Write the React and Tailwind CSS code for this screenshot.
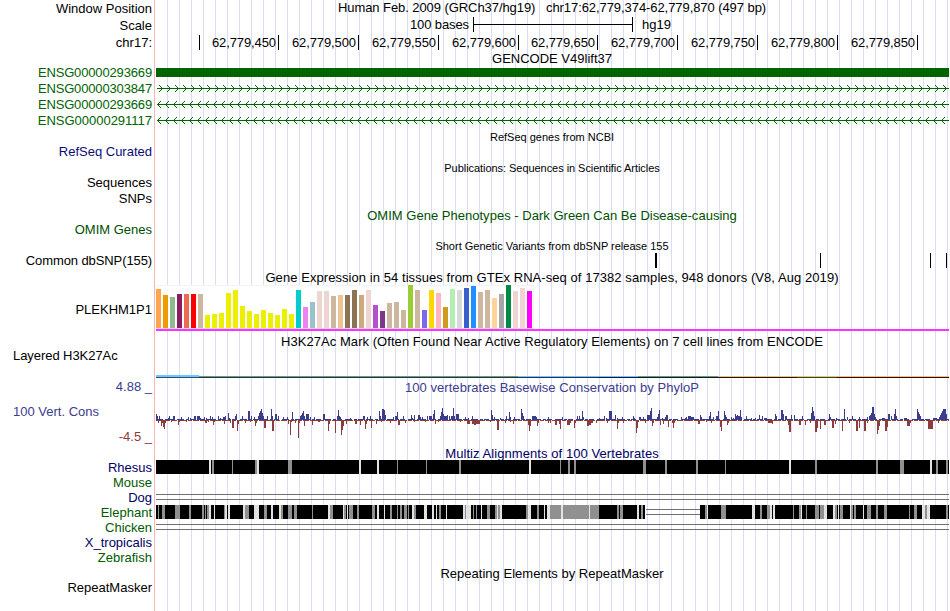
// Visible width of the track image and where the data area starts
const LEFT = 155
const RIGHT = 949

const GTEX = [
  [39, '#ffa54f'], [33, '#ee9a00'], [31, '#8fbc8f'], [34, '#8b1c62'], [34, '#ee6a50'], [34, '#ff0000'],
  [34, '#cdb79e'], [13, '#eeee00'], [14, '#eeee00'], [15, '#eeee00'], [35, '#eeee00'], [38, '#eeee00'],
  [22, '#eeee00'], [17, '#eeee00'], [14, '#eeee00'], [18, '#eeee00'], [15, '#eeee00'], [13, '#eeee00'],
  [19, '#eeee00'], [14, '#eeee00'], [38, '#00cdcd'], [21, '#ee82ee'], [26, '#9ac0cd'], [37, '#eed5d2'],
  [37, '#eed5d2'], [32, '#cdb79e'], [33, '#eec591'], [33, '#8b7355'], [38, '#8b7355'], [33, '#cdaa7d'],
  [38, '#eed5d2'], [23, '#b452cd'], [17, '#7a378b'], [25, '#cdb79e'], [26, '#cdb79e'], [18, '#cdb79e'],
  [43, '#9acd32'], [38, '#cdb79e'], [18, '#7b68ee'], [38, '#ffd700'], [35, '#ffb6c1'], [21, '#cd9b1d'],
  [39, '#b4eeb4'], [38, '#d9d9d9'], [40, '#3a5fcd'], [42, '#1e90ff'], [36, '#cdb79e'], [38, '#cdb79e'],
  [30, '#ffd39b'], [34, '#a6a6a6'], [43, '#008b45'], [37, '#eed5d2'], [40, '#eed5d2'], [37, '#ff00ff'],
]

// PhyloP scores as [x, height, width]
const CONSERVED = [
  [156, 6], [157, 4], [159, 4], [168, 2], [169, 4], [173, 4, 2], [181, 3], [188, 3], [190, 2], [194, 4, 2],
  [197, 4, 3], [200, 2], [204, 3], [206, 2], [210, 4], [212, 3], [218, 4], [220, 2], [223, 3, 2], [225, 4],
  [228, 7], [229, 2], [235, 4], [236, 6], [242, 4], [248, 9, 2], [251, 4], [254, 3], [258, 4], [259, 7],
  [260, 9], [261, 11], [262, 7], [263, 4], [267, 4], [271, 11], [272, 4], [275, 6, 2], [278, 4], [283, 3],
  [287, 3], [292, 8], [300, 4], [301, 5], [302, 7], [303, 9], [304, 4], [306, 6, 3], [310, 3], [314, 3],
  [323, 6, 2], [337, 4], [338, 10], [339, 4], [340, 3], [350, 2], [363, 4, 2], [367, 3], [370, 4], [379, 9],
  [380, 4], [382, 11, 2], [384, 10], [385, 5], [393, 3], [395, 4], [396, 4], [397, 8], [403, 4], [411, 5],
  [412, 2], [414, 5], [418, 5, 2], [420, 3], [422, 3], [427, 4], [429, 4, 3], [433, 6], [434, 10], [440, 4],
  [441, 8], [442, 12], [443, 6], [444, 4, 3], [447, 5], [449, 4], [451, 4, 2], [453, 12], [454, 4], [456, 6, 3],
  [465, 3], [468, 2], [472, 4], [491, 10], [492, 5], [494, 3], [500, 2], [506, 4], [509, 8], [510, 3], [514, 3],
  [521, 11], [522, 7], [523, 4], [532, 4, 4], [536, 3], [548, 3], [562, 3], [577, 4], [579, 4], [582, 9],
  [583, 3], [599, 2], [604, 4], [606, 2], [609, 9, 3], [615, 5], [617, 2], [622, 3], [633, 4], [634, 2],
  [639, 3, 2], [643, 3], [647, 5, 3], [650, 9], [651, 12], [657, 3], [658, 6], [659, 10], [662, 2], [665, 3],
  [666, 5, 2], [681, 3], [685, 2], [686, 3], [688, 4, 3], [691, 3, 3], [700, 5], [701, 3], [709, 4], [710, 8],
  [713, 3], [716, 4, 2], [718, 9], [724, 9], [725, 5], [726, 3], [731, 3], [733, 2], [735, 6], [736, 4],
  [737, 5], [738, 4, 2], [740, 10], [741, 3], [746, 4], [751, 2], [755, 2], [759, 5], [762, 4], [764, 2, 3],
  [775, 6], [776, 4], [781, 10, 2], [783, 6], [785, 4, 2], [791, 5], [794, 5], [802, 4], [811, 7], [812, 13],
  [813, 9], [814, 4], [829, 6], [830, 3], [836, 2], [844, 11], [847, 3], [852, 4], [859, 3], [867, 3],
  [869, 4], [870, 5], [871, 7], [872, 13, 2], [874, 6], [875, 3], [882, 2, 3], [888, 6, 2], [891, 4], [894, 6],
  [895, 11], [896, 4], [904, 2, 3], [917, 11], [918, 8], [919, 6], [920, 4], [933, 2, 4], [939, 3], [940, 5],
  [941, 7], [942, 9], [943, 11, 3], [945, 9], [946, 6],
]

const DIVERGED = [
  [158, 3], [161, 6], [162, 3], [163, 7], [164, 9], [165, 3], [171, 2], [178, 5], [179, 2], [186, 2],
  [205, 3, 2], [208, 2], [213, 5], [214, 2], [224, 4], [230, 3], [232, 8, 2], [237, 11], [238, 4], [245, 3],
  [250, 2], [255, 6], [256, 3], [264, 8, 2], [272, 11, 2], [288, 4], [290, 15], [291, 2], [295, 3], [298, 18],
  [299, 3], [304, 6], [312, 5], [318, 2], [319, 2], [328, 11], [329, 4], [335, 13], [341, 15],
  [342, 10], [343, 6], [346, 4], [355, 4, 2], [360, 5], [365, 9], [366, 4], [371, 8], [376, 4], [381, 2],
  [390, 3], [398, 5, 2], [405, 3], [414, 2], [425, 2], [435, 4], [438, 2], [460, 2], [467, 4, 3], [472, 4, 2],
  [474, 5, 2], [476, 4, 4], [490, 2], [497, 10, 2], [505, 3], [510, 2], [513, 4], [528, 5], [529, 11],
  [530, 6], [537, 6], [538, 3], [548, 3], [550, 3], [555, 5], [556, 5], [559, 4], [560, 9], [567, 5, 3],
  [570, 3], [574, 8], [575, 3], [587, 6, 2], [589, 5, 2], [591, 3, 2], [596, 3], [607, 3], [617, 9], [618, 3],
  [623, 3], [636, 13], [637, 8], [638, 2], [645, 3], [652, 6], [653, 3], [660, 5], [663, 4], [668, 7],
  [672, 3], [673, 8], [674, 3], [698, 4, 2], [706, 2], [711, 3], [720, 7], [721, 11], [727, 5], [728, 3],
  [768, 3, 4], [772, 4], [788, 5], [789, 12, 2], [799, 5, 2], [805, 5], [810, 3], [815, 12, 2], [817, 8],
  [820, 9], [824, 5, 2], [832, 8, 2], [835, 4], [842, 11], [849, 3], [856, 11, 2], [859, 8], [864, 11, 2],
  [867, 3], [877, 14], [878, 10], [879, 6], [885, 11, 2], [887, 7], [907, 6, 3], [910, 3], [928, 9, 5], [938, 3],
]

// Less conserved blocks in the alignments, [x, width, shade]
const G = '#909090'
const L = '#e2e2e2'
const RHESUS = [
  [209, 2, L], [212, 2, G], [232, 1, G], [255, 2, G], [257, 2, L], [288, 4, G], [359, 2, L], [377, 2, L],
  [397, 1, G], [426, 1, G], [459, 2, G], [529, 2, L], [560, 1, G], [568, 2, G], [574, 2, G], [643, 3, G],
  [665, 2, G], [696, 2, G], [725, 1, G], [789, 2, L], [815, 2, G], [876, 2, G], [900, 4, G], [930, 2, L],
  [936, 2, G], [946, 2, G],
]
const ELEPHANT = [
  [158, 1, G], [162, 3, G], [175, 5, G], [189, 2, G], [202, 2, G], [205, 1, G], [207, 2, G], [209, 2, L],
  [214, 1, L], [224, 1, G], [225, 2, L], [228, 2, L], [243, 2, L], [245, 4, G], [254, 5, L], [264, 3, G],
  [271, 2, L], [279, 2, L], [281, 2, G], [288, 4, G], [294, 3, G], [312, 1, G], [328, 2, L], [330, 3, G],
  [343, 1, L], [344, 2, G], [347, 1, L], [349, 4, G], [357, 2, G], [372, 3, G], [377, 2, L], [384, 1, L],
  [390, 2, G], [397, 1, G], [400, 2, G], [404, 3, G], [408, 1, G], [412, 2, L], [414, 2, G], [424, 3, L],
  [432, 2, L], [436, 1, L], [439, 2, G], [446, 1, L], [463, 2, L], [465, 1, G], [466, 5, L], [473, 1, G],
  [476, 1, G], [481, 1, L], [487, 3, G], [495, 2, G], [497, 1, L], [498, 2, G], [500, 2, L], [526, 2, G],
  [528, 3, L], [537, 2, G], [544, 1, L], [547, 3, L], [550, 11, G], [561, 2, L], [563, 26, G], [589, 1, L],
  [590, 9, G], [617, 2, G], [620, 3, G], [637, 2, L], [641, 2, G], [705, 2, G], [707, 1, L], [721, 5, G],
  [752, 3, L], [760, 2, G], [767, 3, G], [770, 2, L], [773, 2, L], [793, 1, G], [799, 2, G], [801, 1, L],
  [806, 1, G], [815, 4, G], [820, 4, G], [824, 3, L], [833, 2, L], [835, 2, G], [838, 1, L], [840, 3, G],
  [850, 1, L], [851, 2, G], [854, 2, G], [863, 1, L], [867, 4, G], [876, 2, G], [884, 3, G], [909, 1, G],
  [914, 3, G], [922, 3, L], [925, 2, G], [927, 3, L], [946, 2, G],
]

const RULER = [
  [199, ''], [278, '62,779,450'], [358, '62,779,500'], [438, '62,779,550'], [518, '62,779,600'],
  [597, '62,779,650'], [677, '62,779,700'], [757, '62,779,750'], [837, '62,779,800'], [917, '62,779,850'],
]

// A drawing that fills the data area; x is in window pixels, y starts at the row's top
function Canvas({ h, children }) {
  return (
    <svg
      className="block"
      width={RIGHT - LEFT}
      height={h}
      viewBox={`${LEFT} 0 ${RIGHT - LEFT} ${h}`}
      shapeRendering="crispEdges"
    >
      {children}
    </svg>
  )
}

function Row({ className, label, labelClass = 'items-center justify-end', children }) {
  return (
    <div className={`flex shrink-0 ${className}`}>
      <div className={`flex w-[152px] mr-[3px] shrink-0 whitespace-pre ${labelClass}`}>{label}</div>
      <div className="flex-1">{children}</div>
    </div>
  )
}

// 16px rows keep their label one pixel above the middle
const RAISED = 'items-center justify-end pb-0.5'

function Title({ className, children }) {
  return (
    <div className={`flex shrink-0 items-center justify-center whitespace-pre pl-[155px] ${className}`}>{children}</div>
  )
}

function Intron({ dir }) {
  const arrows = []
  for (let x = dir > 0 ? 162 : 157; x < RIGHT; x += 8) {
    arrows.push(
      <g key={x}>
        <rect x={x - dir} y="6" width="1" height="1" />
        <rect x={x - dir} y="8" width="1" height="1" />
        <rect x={x - dir * 2} y="5" width="1" height="1" />
        <rect x={x - dir * 2} y="9" width="1" height="1" />
        <rect x={x - dir * 3} y="4" width="1" height="1" />
        <rect x={x - dir * 3} y="10" width="1" height="1" />
      </g>
    )
  }
  return (
    <Canvas h={16}>
      <g fill="#006400">
        <rect x="157" y="7" width="792" height="1" />
        {arrows}
      </g>
    </Canvas>
  )
}

function Alignment({ spans, blocks, children }) {
  return (
    <Canvas h={15}>
      {spans.map(([x, w]) => (
        <rect key={x} x={x} y="0" width={w} height="14" fill="#000" />
      ))}
      {blocks.map(([x, w, fill]) => (
        <rect key={x} x={x} y="0" width={w} height="14" fill={fill} />
      ))}
      {children}
    </Canvas>
  )
}

function DoubleLine({ x = 156, w = 793 }) {
  return (
    <g fill="#707070">
      <rect x={x} y="4" width={w} height="1" />
      <rect x={x} y="9" width={w} height="1" />
    </g>
  )
}

export default function App() {
  return (
    <div className="w-[950px] h-[611px] overflow-hidden bg-white">
      <div className="flex h-full w-[949px] flex-col bg-[linear-gradient(to_right,transparent_154px,#ffb4b4_154px,#ffb4b4_155px,#fff_155px,#fff_156px,transparent_156px),repeating-linear-gradient(to_right,transparent_0px,transparent_11px,#dcdcf5_11px,#dcdcf5_12px)] bg-[length:156px_100%,793px_100%] bg-[position:0_0,156px_0] bg-no-repeat font-['Liberation_Sans',Arial,sans-serif] text-[13px] leading-none text-black">
        <Row className="h-[17px]" label="Window Position">
          <div className="flex h-[15px] items-center justify-center whitespace-pre tracking-[-0.07px]">
            Human Feb. 2009 (GRCh37/hg19)   chr17:62,779,374-62,779,870 (497 bp)
          </div>
        </Row>

        <Row className="h-[17px]" label="Scale">
          <div className="flex h-4 items-center">
            <span className="w-[314px] pb-px text-right tracking-[-0.1px]">100 bases</span>
            <svg className="ml-1 block" width="160" height="16" shapeRendering="crispEdges">
              <path d="M0 0h1v15h-1zM159 0h1v15h-1zM0 7h160v1h-160z" />
            </svg>
            <span className="ml-[9px] pb-px">hg19</span>
          </div>
        </Row>

        <Row className="h-[17px]" label="chr17:">
          <div className="flex h-full">
            {RULER.map(([x, text], i) => (
              <div
                key={x}
                className="flex shrink-0 items-center justify-end"
                style={{ width: x + 1 - (i ? RULER[i - 1][0] + 1 : LEFT) }}
              >
                <span className="mr-[2px] tracking-[-0.1px]">{text}</span>
                <span className="h-[15px] w-px bg-black" />
              </div>
            ))}
          </div>
        </Row>

        <Title className="h-[14px]">GENCODE V49lift37</Title>
        <Row className="h-4 tracking-[-0.15px] text-[#006400]" label="ENSG00000293669" labelClass={RAISED}>
          <Canvas h={16}>
            <rect x="156" y="3" width="793" height="9" fill="#006400" />
          </Canvas>
        </Row>
        <Row className="h-4 tracking-[-0.15px] text-[#006400]" label="ENSG00000303847" labelClass={RAISED}>
          <Intron dir={1} />
        </Row>
        <Row className="h-4 tracking-[-0.15px] text-[#006400]" label="ENSG00000293669" labelClass={RAISED}>
          <Intron dir={-1} />
        </Row>
        <Row className="h-4 tracking-[-0.02px] text-[#006400]" label="ENSG00000291117" labelClass={RAISED}>
          <Intron dir={-1} />
        </Row>

        <Title className="h-[15px] pt-0.5 text-[11px]">RefSeq genes from NCBI</Title>
        <Row className="h-4 text-[#0c0c78]" label="RefSeq Curated" labelClass={RAISED} />

        <Title className="h-[15px] pt-0.5 text-[11px] tracking-[-0.05px]">
          Publications: Sequences in Scientific Articles
        </Title>
        <Row className="h-4" label="Sequences" labelClass={RAISED} />
        <Row className="h-4" label="SNPs" labelClass={RAISED} />

        <Title className="h-[14px] pt-[3px] tracking-[0.02px] text-[#005000]">
          OMIM Gene Phenotypes - Dark Green Can Be Disease-causing
        </Title>
        <Row className="h-4 text-[#005000]" label="OMIM Genes" />

        <Title className="h-4 pt-[3px] text-[11px]">Short Genetic Variants from dbSNP release 155</Title>
        <Row className="h-4 tracking-[-0.1px]" label="Common dbSNP(155)" labelClass={RAISED}>
          <Canvas h={16}>
            <path d="M655 0h2v15h-2zM820 0h1v15h-1zM930 0h1v15h-1zM946 0h1v15h-1z" />
          </Canvas>
        </Row>

        <Title className="h-4 tracking-[0.065px]">
          Gene Expression in 54 tissues from GTEx RNA-seq of 17382 samples, 948 donors (V8, Aug 2019)
        </Title>
        <Row className="h-[49px]" label="PLEKHM1P1">
          <Canvas h={49}>
            <rect x="156" y="0" width="378" height="44" fill="#f3f3f3" />
            <rect x="156" y="1" width="377" height="42" fill="#fff" />
            {GTEX.map(([h, fill], i) => (
              <rect key={i} x={156 + i * 7} y={43 - h} width="5" height={h} fill={fill} />
            ))}
            <rect x="156" y="43" width="378" height="1" fill="#d8d8d8" />
            <rect x="156" y="44" width="793" height="2" fill="#ff33ff" />
          </Canvas>
        </Row>

        <Title className="h-[15px] tracking-[0.05px]">
          H3K27Ac Mark (Often Found Near Active Regulatory Elements) on 7 cell lines from ENCODE
        </Title>
        <Row className="h-[29px]" label="Layered H3K27Ac" labelClass="h-[13px] items-center pl-[13px] tracking-[-0.06px]">
          <Canvas h={29}>
            <rect x="156" y="26" width="43" height="2" fill="#6ec8ff" />
            <rect x="199" y="27" width="319" height="1" fill="#64a564" />
            <rect x="518" y="27" width="120" height="1" fill="#6ec8ff" />
            <rect x="638" y="27" width="80" height="1" fill="#64a564" />
            <rect x="718" y="27" width="231" height="1" fill="#ffc050" />
            <rect x="156" y="28" width="43" height="1" fill="#2d4b78" />
            <rect x="199" y="28" width="399" height="1" fill="#2d2d5f" />
            <rect x="598" y="28" width="199" height="1" fill="#14143c" />
            <rect x="797" y="28" width="40" height="1" fill="#234b4b" />
            <rect x="837" y="28" width="112" height="1" fill="#280a28" />
          </Canvas>
        </Row>

        <Row className="h-4 text-[#3c3c8c]" label="4.88 _">
          <div className="flex h-[19px] items-center justify-center tracking-[0.04px]">
            100 vertebrates Basewise Conservation by PhyloP
          </div>
        </Row>
        <div className="flex h-[53px] shrink-0">
          <div className="flex w-[152px] mr-[3px] flex-col text-[#3c3c8c]">
            <span className="mt-[11px] pl-[13px]">100 Vert. Cons</span>
            <span className="mt-3 text-right text-[#8c3c3c] whitespace-pre">-4.5 _</span>
          </div>
          <Canvas h={53}>
            <path d="M156 25.5H949" stroke="#3c3c8c" strokeDasharray="7 2 3 1 5 3" />
            <path d="M156 26.5H949" stroke="#8c3c3c" strokeDasharray="9 1 4 1 6 1" />
            {CONSERVED.map(([x, h, w = 1], i) => (
              <rect key={i} x={x} y={26 - h} width={w} height={h} fill="#3c3c8c" />
            ))}
            {DIVERGED.map(([x, h, w = 1], i) => (
              <rect key={i} x={x} y="26" width={w} height={h} fill="#8c3c3c" />
            ))}
          </Canvas>
        </div>

        <Title className="h-[13px] tracking-[0.07px] text-[#000064]">Multiz Alignments of 100 Vertebrates</Title>
        <Row className="h-[15px] text-[#000064]" label="Rhesus">
          <Alignment spans={[[156, 793]]} blocks={RHESUS} />
        </Row>
        <Row className="h-[15px] text-[#005a00]" label="Mouse" />
        <Row className="h-[15px] text-[#000064]" label="Dog">
          <Canvas h={15}>
            <DoubleLine />
          </Canvas>
        </Row>
        <Row className="h-[15px] text-[#005a00]" label="Elephant">
          <Alignment spans={[[156, 489], [700, 249]]} blocks={ELEPHANT}>
            <DoubleLine x={646} w={54} />
          </Alignment>
        </Row>
        <Row className="h-[15px] text-[#005a00]" label="Chicken">
          <Canvas h={15}>
            <DoubleLine />
          </Canvas>
        </Row>
        <Row className="h-[15px] text-[#000064]" label="X_tropicalis" />
        <Row className="h-[15px] text-[#005a00]" label="Zebrafish" />

        <Title className="h-4 tracking-[0.02px]">Repeating Elements by RepeatMasker</Title>
        <Row className="h-[14px]" label="RepeatMasker" labelClass={RAISED} />
      </div>
    </div>
  )
}
